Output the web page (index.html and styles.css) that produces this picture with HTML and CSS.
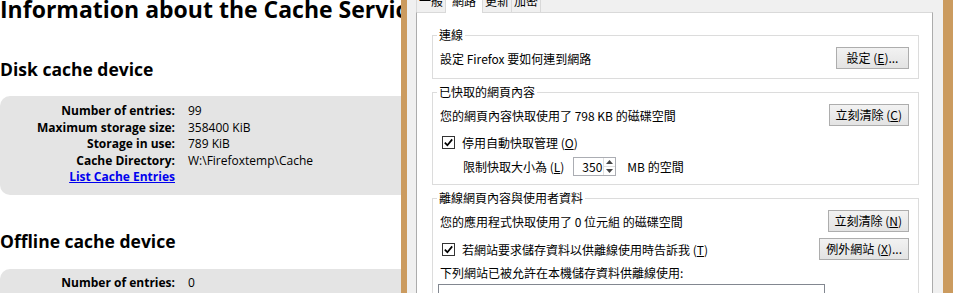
FILE: index.html
```html
<!DOCTYPE html>
<html>
<head>
<meta charset="utf-8">
<title>Cache</title>
<link rel="stylesheet" href="styles.css">
</head>
<body>
<div class="screen">
  <div class="page">
    <h1 class="title">Information about the Cache Service</h1>
    <h2 class="dev-title">Disk cache device</h2>
    <div class="dev-box">
      <div class="dev-grid">
        <span class="lbl">Number of entries:</span><span class="val">99</span>
        <span class="lbl">Maximum storage size:</span><span class="val">358400 KiB</span>
        <span class="lbl">Storage in use:</span><span class="val">789 KiB</span>
        <span class="lbl">Cache Directory:</span><span class="val">W:\Firefoxtemp\Cache</span>
        <a class="lbl link" href="#">List Cache Entries</a><span class="val"></span>
      </div>
    </div>
    <h2 class="dev-title second">Offline cache device</h2>
    <div class="dev-box second">
      <div class="dev-grid">
        <span class="lbl">Number of entries:</span><span class="val">0</span>
      </div>
    </div>
  </div>
  <div class="frame-l"></div>
  <div class="dlg">
    <div class="tabs">
      <div class="tab">一般</div>
      <div class="tab sel">網路</div>
      <div class="tab">更新</div>
      <div class="tab">加密</div>
    </div>
    <div class="panel">
      <fieldset class="grp">
        <legend>連線</legend>
        <div class="row">
          <span>設定 Firefox 要如何連到網路</span>
          <button class="btn">設定 (<u>E</u>)...</button>
        </div>
      </fieldset>
      <fieldset class="grp gap">
        <legend>已快取的網頁內容</legend>
        <div class="row">
          <span>您的網頁內容快取使用了 798 KB 的磁碟空間</span>
          <button class="btn">立刻清除 (<u>C</u>)</button>
        </div>
        <div class="row-left cb-row">
          <svg class="cb" width="13" height="13" viewBox="0 0 13 13"><rect x="0.5" y="0.5" width="12" height="12" fill="#fff" stroke="#333"/><path d="M2.8 6.6 L5.4 9.2 L10.2 3.4" fill="none" stroke="#000" stroke-width="1.7"/></svg>
          <span>停用自動快取管理 (<u>O</u>)</span>
        </div>
        <div class="row-left limit-row">
          <span>限制快取大小為 (<u>L</u>)</span>
          <div class="spin">
            <span class="spin-val">350</span>
            <span class="spin-btns">
              <span class="spin-b"><svg width="7" height="4" viewBox="0 0 7 4"><path d="M0 4 L3.5 0 L7 4 Z" fill="#444"/></svg></span>
              <span class="spin-b"><svg width="7" height="4" viewBox="0 0 7 4"><path d="M0 0 L7 0 L3.5 4 Z" fill="#444"/></svg></span>
            </span>
          </div>
          <span>MB 的空間</span>
        </div>
      </fieldset>
      <fieldset class="grp gap">
        <legend>離線網頁內容與使用者資料</legend>
        <div class="row">
          <span>您的應用程式快取使用了 0 位元組 的磁碟空間</span>
          <button class="btn">立刻清除 (<u>N</u>)</button>
        </div>
        <div class="row row2">
          <div class="row-left cb-inline">
            <svg class="cb" width="13" height="13" viewBox="0 0 13 13"><rect x="0.5" y="0.5" width="12" height="12" fill="#fff" stroke="#333"/><path d="M2.8 6.6 L5.4 9.2 L10.2 3.4" fill="none" stroke="#000" stroke-width="1.7"/></svg>
            <span>若網站要求儲存資料以供離線使用時告訴我 (<u>T</u>)</span>
          </div>
          <button class="btn">例外網站 (<u>X</u>)...</button>
        </div>
        <div class="list-label">下列網站已被允許在本機儲存資料供離線使用:</div>
        <div class="list-box"></div>
      </fieldset>
    </div>
  </div>
  <div class="frame-r"></div>
</div>
</body>
</html>
```
FILE: styles.css
```css
* { box-sizing: border-box; }
html, body { margin: 0; padding: 0; }
body { width: 953px; height: 293px; overflow: hidden; background: #fff; }
.screen { display: flex; height: 293px; overflow: hidden; }

/* left: about:cache page */
.page { width: 401px; flex: none; overflow: hidden; font-family: "Open Sans", sans-serif; color: #000; }
.title { margin: -5px 0 0 0; font-size: 23px; line-height: 28px; font-weight: 700; white-space: nowrap; }
.dev-title { margin: 35px 0 0 0; font-size: 17.5px; line-height: 22px; font-weight: 700; white-space: nowrap; }
.dev-title.second { margin-top: 35px; }
.dev-box { margin-top: 16px; width: 440px; background: #e4e4e4; border-radius: 10px 0 0 10px; padding: 7px 0 9px; }
.dev-box.second { margin-top: 17px; padding-top: 6px; height: 60px; }
.dev-grid { display: grid; grid-template-columns: 175px auto; column-gap: 13px; font-size: 12px; line-height: 16.6px; white-space: nowrap; }
.lbl { text-align: right; font-weight: 700; }
.link { color: #0000ee; text-decoration: underline; }

/* window frame */
.frame-l { width: 6px; flex: none; background: #cb9b5f; }
.frame-r { width: 10px; flex: none; background: #cb9b5f; }

/* dialog */
.dlg { flex: 1; min-width: 0; background: #f0f0f0; padding: 0 10px 0 9px; display: flex; flex-direction: column;
  font-family: "Noto Sans CJK TC", sans-serif; font-size: 12px; color: #000; }
.tabs { display: flex; height: 12px; align-items: flex-end; flex: none; }
.tab { height: 22px; line-height: 20px; padding: 0 2px; border: 1px solid #d9d9d9; border-bottom: 0; margin-right: -1px; background: #f0f0f0; flex: none; }
.tab.sel { background: #fff; padding: 0 6px; height: 23px; margin-bottom: -1px; position: relative; z-index: 1; border-color: #d9d9d9; }
.panel { flex: 1; background: #fff; border: 1px solid #acacac; border-top-color: #d9d9d9; padding: 15px 13px 0 15px; }

.grp { margin: 0; min-width: 0; border: 1px solid #dcdcdc; padding: 5px 9px 9px 7px; }
.grp.gap { margin-top: 6px; padding-bottom: 8px; }
.grp legend { padding: 0 2px; margin-left: -3px; line-height: 14px; font-size: 12px; }

.row { display: flex; justify-content: space-between; align-items: center; height: 22px; white-space: nowrap; }
.row2 { margin-top: 6px; }
.row-left { display: flex; align-items: center; white-space: nowrap; }
.cb-row { margin-top: 7px; height: 18px; }
.cb { flex: none; margin: 0 7px 0 2px; }
.limit-row { margin-top: 6px; height: 19px; padding-left: 23px; }

.btn { font: inherit; color: #000; height: 22px; min-width: 73px; padding: 0 6px; border: 1px solid #adadad; background: linear-gradient(#f2f2f2, #e3e3e3); border-radius: 0; line-height: 18px; }

.spin { display: flex; width: 43px; height: 19px; border: 1px solid #abadb3; margin: 0 11px 0 9px; background: #fff; }
.spin-val { flex: 1; text-align: right; line-height: 17px; padding-right: 1px; }
.spin-btns { width: 12px; display: flex; flex-direction: column; border-left: 1px solid #e0e0e0; }
.spin-b { flex: 1; display: flex; align-items: center; justify-content: center; }
.spin-b + .spin-b { border-top: 1px solid #e0e0e0; }

.list-label { margin-top: 6px; line-height: 14px; white-space: nowrap; }
.list-box { margin: 4px 0 0 -2px; width: 387px; height: 40px; border: 1px solid #828790; }
```
